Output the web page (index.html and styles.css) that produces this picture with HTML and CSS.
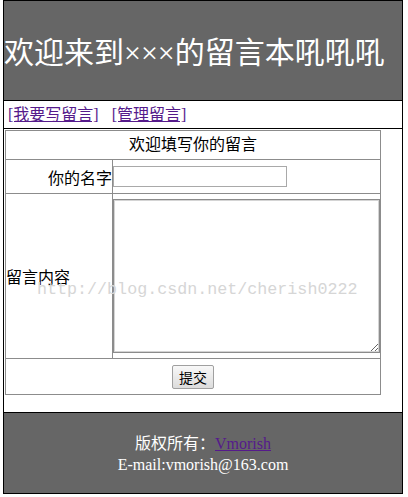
FILE: index.html
```html
<!DOCTYPE html>
<html lang="zh-CN">
<head>
  <meta charset="UTF-8">
  <title>留言本</title>
  <link rel="stylesheet" href="styles.css">
</head>
<body>
  <div class="wrap">
    <div class="header">
      <h1>欢迎来到×××的留言本吼吼吼</h1>
    </div>
    <div class="nav">
      <a href="#">[我要写留言]</a>
      <a href="#" class="second">[管理留言]</a>
    </div>
    <div class="main">
      <form>
        <table class="msg">
          <tr>
            <td colspan="2" class="title">欢迎填写你的留言</td>
          </tr>
          <tr>
            <td class="label right">你的名字</td>
            <td><input type="text" name="name" class="name"></td>
          </tr>
          <tr>
            <td class="label">留言内容</td>
            <td><textarea name="content" class="content"></textarea></td>
          </tr>
          <tr>
            <td colspan="2"><button type="submit" class="submit">提交</button></td>
          </tr>
        </table>
      </form>
      <div class="watermark">http://blog.csdn.net/cherish0222</div>
    </div>
    <div class="footer">
      <p>版权所有：<a href="#">Vmorish</a></p>
      <p>E-mail:vmorish@163.com</p>
    </div>
  </div>
</body>
</html>
```

FILE: styles.css
```css
body { margin: 0 0 0 3px; font-family: "Liberation Serif", "Noto Sans CJK SC", serif; font-size: 16px; color: #000; background: #fff; }
a { color: #551a8b; }
.wrap { width: 398px; border: 1px solid #000; }
.header { height: 99px; background: #666; border-bottom: 1px solid #000; display: flex; align-items: center; }
.header h1 { margin: 0; font-size: 30px; font-weight: normal; color: #fff; line-height: 36px; padding-top: 4px; }
.nav { height: 27px; line-height: 27px; padding-left: 4px; border-bottom: 1px solid #000; }
.nav .second { margin-left: 9px; }
.main { position: relative; height: 283px; padding: 1px 0 0 1px; box-sizing: border-box; }
.msg { border-collapse: collapse; width: 376px; border: 1px solid #8c8c8c; }
.msg td { border: 1px solid #8c8c8c; padding: 0; }
.msg .title { text-align: center; height: 28px; line-height: 28px; }
.msg .label { width: 106px; }
.msg .right { text-align: right; }
.name { display: block; box-sizing: border-box; width: 174px; height: 21px; margin: 6px 0; border: 1px solid #a9a9a9; padding: 1px 2px; font-size: 13px; }
.content { display: block; box-sizing: border-box; width: 267px; height: 154px; margin: 5px 0; border: 1px solid #8c8c8c; box-shadow: inset 0 0 0 1px #d4d4d4; resize: both; }
.submit { display: block; width: 42px; height: 24px; margin: 6px auto 5px; padding: 0; font-family: "Noto Sans CJK SC", sans-serif; font-size: 14px; border: 1px solid #a0a0a0; border-radius: 2px; background: linear-gradient(#f8f8f8, #dcdcdc); }
.watermark { position: absolute; left: 33px; top: 151px; font-family: "Liberation Mono", monospace; font-size: 16.7px; color: #d6d6d6; pointer-events: none; }
.footer { height: 81px; background: #666; border-top: 1px solid #000; color: #fff; text-align: center; padding-top: 20px; box-sizing: border-box; }
.footer p { margin: 0; line-height: 21px; }
```
